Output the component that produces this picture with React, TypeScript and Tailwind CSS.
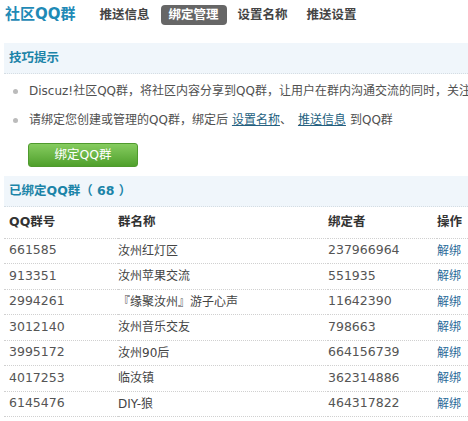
import React from "react";

const rows = [
  { id: "661585", name: "汝州红灯区", owner: "237966964" },
  { id: "913351", name: "汝州苹果交流", owner: "551935" },
  { id: "2994261", name: "『缘聚汝州』游子心声", owner: "11642390" },
  { id: "3012140", name: "汝州音乐交友", owner: "798663" },
  { id: "3995172", name: "汝州90后", owner: "664156739" },
  { id: "4017253", name: "临汝镇", owner: "362314886" },
  { id: "6145476", name: "DIY-狼", owner: "464317822" },
  { id: "6307712", name: "汝州快乐老家", owner: "8012365" },
];

const font = { fontFamily: '"DejaVu Sans", "Noto Sans CJK SC", sans-serif' };

function Tab({ label, active }: { label: string; active?: boolean }) {
  return (
    <span
      className={`px-2 h-5 flex items-center rounded text-[12.5px] font-bold ${
        active ? "bg-[#666666] text-white" : "text-[#444444]"
      }`}
    >
      {label}
    </span>
  );
}

function SectionTitle({ children }: { children: React.ReactNode }) {
  return (
    <div className="h-[31px] flex items-center pl-[5px] bg-[#f0f6fb] border-b border-dotted border-[#d5dde3] text-[12.5px] font-bold text-[#1b84a8] whitespace-nowrap">
      {children}
    </div>
  );
}

function Bullet() {
  return <span className="shrink-0 w-[5px] h-[5px] rounded-full bg-[#bbbbbb] ml-[9px] mr-[11px]" />;
}

export default function App() {
  return (
    <div className="w-[468px] h-[421px] overflow-hidden bg-white text-[#505050] text-xs" style={font}>
      {/* top nav */}
      <div className="h-[33px] flex items-center pl-[5px] pb-[3px]">
        <span className="text-[15px] font-bold text-[#1f8ab6] mr-[16px]">社区QQ群</span>
        <div className="flex items-center gap-[3px]">
          <Tab label="推送信息" />
          <Tab label="绑定管理" active />
          <Tab label="设置名称" />
          <Tab label="推送设置" />
        </div>
      </div>

      <div className="ml-1 mt-[10px] w-[480px]">
        <SectionTitle>技巧提示</SectionTitle>
        <ul className="pt-[3px]">
          <li className="h-[28px] flex items-center whitespace-nowrap">
            <Bullet />
            Discuz!社区QQ群，将社区内容分享到QQ群，让用户在群内沟通交流的同时，关注社区动态
          </li>
          <li className="h-[30px] flex items-center whitespace-nowrap">
            <Bullet />
            请绑定您创建或管理的QQ群，绑定后
            <a className="ml-1 text-[#245f80] underline">设置名称</a>
            <span className="mr-[6px]">、</span>
            <a className="text-[#245f80] underline">推送信息</a>
            <span className="ml-1">到QQ群</span>
          </li>
        </ul>
        <div className="pl-6 pt-[8px] pb-[9px]">
          <button className="w-[110px] h-[24px] rounded-[3px] border border-[#4f9a2e] bg-gradient-to-b from-[#86cc5f] to-[#4fa02b] text-white text-[12.5px]">
            绑定QQ群
          </button>
        </div>
        <SectionTitle>已绑定QQ群（ 68 ）</SectionTitle>
        <table className="w-[468px] table-fixed border-collapse">
          <thead>
            <tr className="h-[31px] border-b border-dotted border-[#d0d0d0] text-[#333333] font-bold text-[12.5px]">
              <td className="pl-[5px] w-[114px]">QQ群号</td>
              <td className="w-[210px]">群名称</td>
              <td className="w-[109px]">绑定者</td>
              <td>操作</td>
            </tr>
          </thead>
          <tbody>
            {rows.map((r) => (
              <tr key={r.id} className="h-[25.5px] border-b border-dotted border-[#d0d0d0]">
                <td className="pl-[5px] text-[#555555] text-[12.5px]">{r.id}</td>
                <td className="text-[#444444]">{r.name}</td>
                <td className="text-[#555555] text-[12.5px]">{r.owner}</td>
                <td className="text-[#2a6a98]">解绑</td>
              </tr>
            ))}
          </tbody>
        </table>
      </div>
    </div>
  );
}
